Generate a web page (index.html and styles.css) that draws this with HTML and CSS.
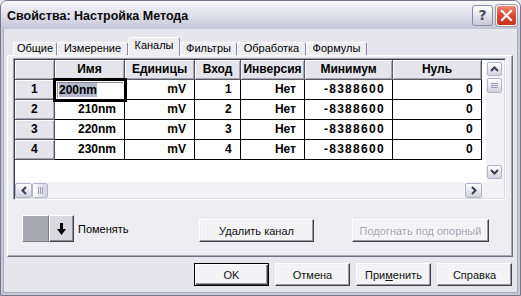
FILE: index.html
```html
<!DOCTYPE html>
<html lang="ru">
<head>
<meta charset="utf-8">
<title>Свойства: Настройка Метода</title>
<link rel="stylesheet" href="styles.css">
</head>
<body>
<div class="window">
  <div class="titlebar">
    <span class="title">Свойства: Настройка Метода</span>
    <div class="tb-buttons">
      <span class="tb-btn tb-help">?</span>
      <span class="tb-btn tb-close"><svg width="13" height="13" viewBox="0 0 13 13"><path d="M2 2 L11 11 M11 2 L2 11" stroke="#fff" stroke-width="2.2" stroke-linecap="square"/></svg></span>
    </div>
  </div>
  <div class="client">
    <div class="tabs">
      <div class="tab w1">Общие</div>
      <div class="tab w2">Измерение</div>
      <div class="tab sel w3">Каналы</div>
      <div class="tab w4">Фильтры</div>
      <div class="tab w5">Обработка</div>
      <div class="tab w6">Формулы</div>
    </div>
    <div class="panel">
      <div class="gridframe">
        <div class="gridarea">
          <div class="grid">
            <div class="c fx"></div>
            <div class="c fx">Имя</div>
            <div class="c fx">Единицы</div>
            <div class="c fx">Вход</div>
            <div class="c fx">Инверсия</div>
            <div class="c fx">Минимум</div>
            <div class="c fx">Нуль</div>

            <div class="c fx num">1</div>
            <div class="c focus"><span class="editor"><span class="hl">200nm</span></span></div>
            <div class="c">mV</div>
            <div class="c num">1</div>
            <div class="c">Нет</div>
            <div class="c num">-8388600</div>
            <div class="c num">0</div>

            <div class="c fx num">2</div>
            <div class="c">210nm</div>
            <div class="c">mV</div>
            <div class="c num">2</div>
            <div class="c">Нет</div>
            <div class="c num">-8388600</div>
            <div class="c num">0</div>

            <div class="c fx num">3</div>
            <div class="c">220nm</div>
            <div class="c">mV</div>
            <div class="c num">3</div>
            <div class="c">Нет</div>
            <div class="c num">-8388600</div>
            <div class="c num">0</div>

            <div class="c fx num">4</div>
            <div class="c">230nm</div>
            <div class="c">mV</div>
            <div class="c num">4</div>
            <div class="c">Нет</div>
            <div class="c num">-8388600</div>
            <div class="c num">0</div>
          </div>
          <div class="vgap"></div>
          <div class="vscroll">
            <span class="sbtn vbtn"><svg width="9" height="6" viewBox="0 0 9 6"><path d="M1 5 L4.5 1.5 L8 5" fill="none" stroke="#3c3c50" stroke-width="2"/></svg></span>
            <span class="thumb vthumb"><svg width="7" height="7" viewBox="0 0 7 7"><path d="M0 1.5H7M0 3.5H7M0 5.5H7" stroke="#9a9ab0" stroke-width="1"/></svg></span>
            <span class="vtrack"></span>
            <span class="sbtn vbtn"><svg width="9" height="6" viewBox="0 0 9 6"><path d="M1 1 L4.5 4.5 L8 1" fill="none" stroke="#3c3c50" stroke-width="2"/></svg></span>
          </div>
        </div>
        <div class="hscroll">
          <div class="hbar">
            <span class="sbtn hbtn"><svg width="6" height="9" viewBox="0 0 6 9"><path d="M5 1 L1.5 4.5 L5 8" fill="none" stroke="#3c3c50" stroke-width="2"/></svg></span>
            <span class="thumb hthumb"><svg width="7" height="7" viewBox="0 0 7 7"><path d="M1.5 0V7M3.5 0V7M5.5 0V7" stroke="#9a9ab0" stroke-width="1"/></svg></span>
            <span class="htrack"></span>
            <span class="sbtn hbtn"><svg width="6" height="9" viewBox="0 0 6 9"><path d="M1 1 L4.5 4.5 L1 8" fill="none" stroke="#3c3c50" stroke-width="2"/></svg></span>
          </div>
          <div class="corner"></div>
        </div>
      </div>
      <div class="panel-row">
        <div class="swap">
          <span class="swatch"></span>
          <span class="arrowbtn"><svg width="11" height="14" viewBox="0 0 11 14"><path d="M4 1H7V7H10L5.5 13L1 7H4Z" fill="#000"/></svg></span>
        </div>
        <span class="swap-label">Поменять</span>
        <button class="btn btn-del">Удалить канал</button>
        <button class="btn btn-fit" disabled>Подогнать под опорный</button>
      </div>
    </div>
    <div class="footer">
      <button class="btn fbtn default">OK</button>
      <button class="btn fbtn">Отмена</button>
      <button class="btn fbtn">При<u>м</u>енить</button>
      <button class="btn fbtn">Справка</button>
    </div>
  </div>
</div>
</body>
</html>
```

FILE: styles.css
```css
* { box-sizing: border-box; }
html, body { margin: 0; padding: 0; }
body {
  width: 521px;
  height: 296px;
  overflow: hidden;
  background: #e6e6ec;
  font-family: "Liberation Sans", Arial, sans-serif;
  font-size: 11px;
  color: #000;
}
.window {
  width: 521px;
  height: 296px;
  display: flex;
  flex-direction: column;
  border: 1px solid #77778c;
  border-radius: 7px 7px 0 0;
  background: #e6e6ec;
  overflow: hidden;
}
.titlebar {
  height: 28px;
  flex: none;
  display: flex;
  align-items: center;
  padding: 0 3px 0 6px;
  background: linear-gradient(#fbfbfd 0%, #ececf2 20%, #dedee8 55%, #cdcddc 85%, #c4c4d4 100%);
}
.title {
  flex: 1;
  font-weight: bold;
  font-size: 12.5px;
  color: #0a0a0a;
  padding-top: 1px;
}
.tb-buttons { display: flex; gap: 3px; }
.tb-btn {
  width: 21px;
  height: 21px;
  border-radius: 3px;
  display: flex;
  align-items: center;
  justify-content: center;
}
.tb-help {
  border: 1px solid #8a8aa4;
  background: linear-gradient(#ffffff, #e4e4ee 50%, #c8c8d8);
  color: #4a4a60;
  font-family: "DejaVu Sans", sans-serif;
  font-size: 14px;
  font-weight: bold;
  line-height: 19px;
}
.tb-close {
  border: 1px solid #fff;
  box-shadow: 0 0 0 1px #9a9ab0;
  background: linear-gradient(#f08a78, #dc4a32 45%, #c8321c);
}
.client {
  flex: 1;
  display: flex;
  flex-direction: column;
  border: 2px solid #c9c9d8;
  border-top: 0;
  box-shadow: inset 1px 0 #a8a8b8, inset -1px 0 #a8a8b8, inset 0 -1px #a8a8b8;
  padding: 8px 5px 7px 4px;
  background: #e6e6ec;
}
.tabs {
  height: 18px;
  flex: none;
  display: flex;
  align-items: flex-end;
  padding-left: 6px;
  position: relative;
  z-index: 1;
}
.tab {
  height: 13px;
  flex: none;
  border: 1px solid;
  border-bottom: 0;
  border-color: #ffffff #8a8a98 transparent #ffffff;
  border-radius: 3px 3px 0 0;
  background: #eeeef2;
  text-align: center;
  line-height: 11px;
  white-space: nowrap;
}
.tab.sel {
  height: 19px;
  margin-bottom: -1px;
  line-height: 14px;
  background: #eeeef2;
}
.w1 { width: 44px; }
.w2 { width: 71px; }
.w3 { width: 52px; }
.w4 { width: 57px; }
.w5 { width: 69px; }
.w6 { width: 61px; }
.panel {
  height: 202px;
  flex: none;
  border: 1px solid;
  border-color: #ffffff #6e6e7e #6e6e7e #ffffff;
  box-shadow: inset -1px -1px #a8a8b6;
  background: #eeeef2;
  padding: 2px 0 0 5px;
}
.gridframe {
  width: 493px;
  height: 142px;
  border: 1px solid;
  border-color: #9c9caa #ffffff #ffffff #9c9caa;
  padding: 1px;
  box-shadow: inset 1px 1px #404048, inset -1px -1px #dcdce4;
  background: #ffffff;
  display: flex;
  flex-direction: column;
}
.gridarea {
  height: 122px;
  flex: none;
  display: flex;
  background: #ffffff;
}
.grid {
  width: 467px;
  flex: none;
  display: grid;
  grid-template-columns: 40px 70px 70px 46px 64px 88px 89px;
  grid-auto-rows: 20px;
  align-content: start;
}
.c {
  border-right: 1px solid #000;
  border-bottom: 1px solid #000;
  font-weight: bold;
  font-size: 12px;
  line-height: 19px;
  text-align: right;
  padding-right: 8px;
  white-space: nowrap;
  overflow: hidden;
  background: #fff;
}
.c.num { letter-spacing: 1.3px; padding-right: 7px; }
.c.fx {
  background: #e4e4ea;
  text-align: center;
  padding: 0;
  border-color: #5a5a64;
  box-shadow: inset 1px 1px #ffffff, inset -1px -1px #a4a4ae;
}
.c.fx.num { padding-left: 1px; }
.c.focus {
  position: relative;
  z-index: 2;
  overflow: visible;
  outline: 3px solid #000;
  outline-offset: -1px;
  padding: 2px 1px 0 2px;
  text-align: left;
  line-height: 15px;
}
.editor {
  display: block;
  height: 16px;
  border-left: 1px solid #8c8c98;
  border-top: 1px solid #8c8c98;
  padding-left: 1px;
}
.hl { background: #b4bacb; }
.vgap { width: 4px; flex: none; }
.vscroll {
  width: 18px;
  flex: none;
  display: flex;
  flex-direction: column;
  padding: 2px 2px 3px 1px;
  background: #f3f3f7;
}
.sbtn, .thumb {
  display: flex;
  align-items: center;
  justify-content: center;
  border: 1px solid #b4b4c8;
  border-radius: 2px;
  background: linear-gradient(#ffffff, #e2e2ec 60%, #d2d2de);
  flex: none;
}
.vbtn { height: 14px; }
.vthumb { height: 15px; margin-top: 2px; }
.vtrack { flex: 1; }
.hscroll {
  height: 16px;
  flex: none;
  display: flex;
}
.hbar {
  width: 467px;
  display: flex;
  padding-top: 1px;
  background: #f3f3f7;
}
.hbtn { width: 17px; height: 15px; }
.hthumb { width: 16px; height: 15px; background: linear-gradient(90deg, #ffffff, #e2e2ec 60%, #d2d2de); }
.htrack { flex: 1; }
.corner { flex: 1; background: #f3f3f7; }
.panel-row {
  display: flex;
  align-items: flex-end;
  margin-top: 15px;
  padding-left: 9px;
}
.swap { display: flex; }
.swatch {
  width: 27px;
  height: 27px;
  background: #a8a8b0;
  border: 1px solid;
  border-color: #ffffff #7c7c88 #7c7c88 #ffffff;
}
.arrowbtn {
  width: 25px;
  height: 27px;
  display: flex;
  align-items: center;
  justify-content: center;
  background: #d8d8de;
  border: 1px solid;
  border-color: #ffffff #404048 #404048 #ffffff;
  box-shadow: inset -1px -1px #8c8c98;
}
.swap-label {
  width: 121px;
  margin-left: 4px;
  align-self: center;
  padding-top: 1px;
}
.btn {
  height: 23px;
  font-family: "Liberation Sans", Arial, sans-serif;
  font-size: 11px;
  font-weight: normal;
  color: #101010;
  background: #f4f4f6;
  border: 1px solid;
  border-color: #ffffff #404048 #404048 #ffffff;
  box-shadow: inset -1px -1px #9a9aa6, inset 1px 1px #f0f0f4;
  padding: 0;
  margin: 0;
}
.btn-del { width: 115px; }
.btn-fit {
  width: 137px;
  margin-left: 38px;
  color: #a4a4b0;
  text-shadow: 1px 1px #ffffff;
}
.footer {
  display: flex;
  justify-content: flex-end;
  gap: 6px;
  margin-top: 6px;
  padding-right: 1px;
}
.fbtn { width: 75px; }
.fbtn.default {
  border: 1px solid #000;
  box-shadow: inset 1px 1px #ffffff, inset -1px -1px #404048, inset -2px -2px #9a9aa6;
}
```
